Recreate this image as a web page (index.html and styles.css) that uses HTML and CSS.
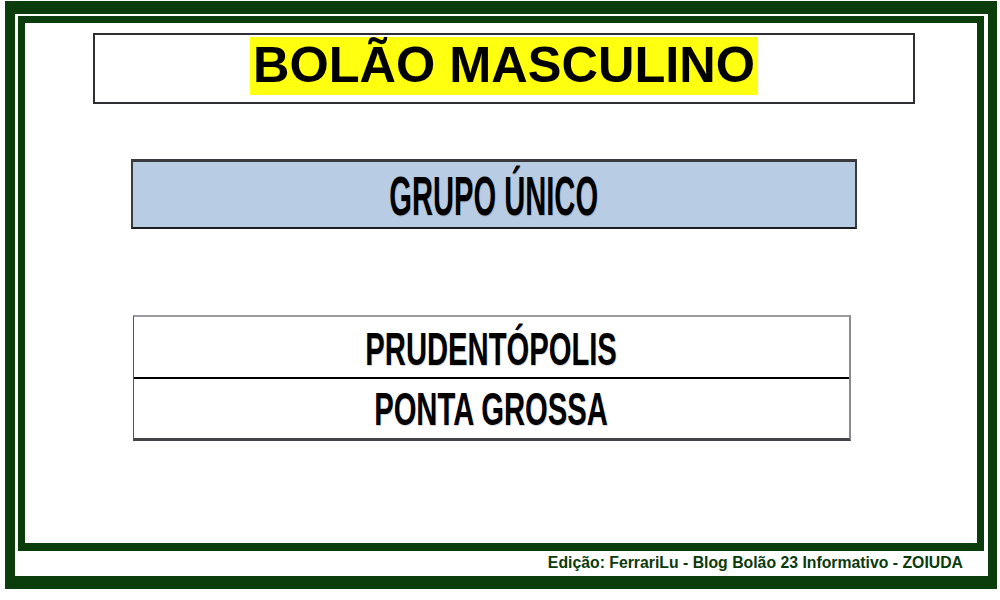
FILE: index.html
```html
<!DOCTYPE html>
<html lang="pt">
<head>
<meta charset="utf-8">
<title>Bolão Masculino</title>
<link rel="stylesheet" href="styles.css">
</head>
<body>
<div class="frame">
  <div class="panel">
    <div class="title-box">
      <span class="title-mark">BOLÃO MASCULINO</span>
    </div>
    <div class="group-box">
      <span class="narrow narrow-group">GRUPO ÚNICO</span>
    </div>
    <div class="teams">
      <div class="team team-first"><span class="narrow narrow-team">PRUDENTÓPOLIS</span></div>
      <div class="team team-second"><span class="narrow narrow-team">PONTA GROSSA</span></div>
    </div>
  </div>
  <div class="footer">Edição: FerrariLu - Blog Bolão 23 Informativo - ZOIUDA</div>
</div>
</body>
</html>
```

FILE: styles.css
```css
html, body {
  margin: 0;
  padding: 0;
  background: #ffffff;
}

body {
  width: 1000px;
  height: 600px;
  overflow: hidden;
  font-family: "Liberation Sans", Arial, sans-serif;
}

.frame {
  box-sizing: border-box;
  margin: 1px 0 0 5px;
  width: 992px;
  height: 588px;
  border-style: solid;
  border-color: #0b3c0b;
  border-width: 13px 9px 13px 10px;
  padding: 2px 4px 0 3px;
  display: flex;
  flex-direction: column;
}

.panel {
  box-sizing: border-box;
  height: 535px;
  border: 7px solid #0b3c0b;
  border-bottom-width: 8px;
  background: #ffffff;
  display: flex;
  flex-direction: column;
  align-items: flex-start;
}

.title-box {
  box-sizing: border-box;
  margin: 10px 0 0 68px;
  width: 822px;
  height: 71px;
  border: 2px solid #2f2f33;
  padding: 2px 0 0;
  text-align: center;
}

.title-mark {
  display: inline-block;
  height: 58px;
  padding: 0 3px;
  line-height: 55px;
  background: #ffff10;
  color: #000000;
  font-weight: 700;
  font-size: 50.5px;
  white-space: nowrap;
}

.group-box {
  box-sizing: border-box;
  margin: 55px 0 0 106px;
  width: 726px;
  height: 70px;
  background: #b8cce4;
  border-style: solid;
  border-color: #3a3a3e;
  border-width: 3px 2px 2px 2px;
  border-bottom-color: #1e1e22;
  text-align: center;
  line-height: 67px;
  overflow: visible;
}

.narrow {
  display: inline-block;
  font-weight: 700;
  color: #000000;
  white-space: nowrap;
  text-shadow: 1px 1px 1px rgba(110, 110, 110, 0.3);
}

.narrow-group {
  font-size: 56px;
  transform: scaleX(0.52);
}

.narrow-team {
  font-size: 46px;
  transform: scaleX(0.635);
}

.teams {
  box-sizing: border-box;
  margin: 86px 0 0 108px;
  width: 718px;
  border-style: solid;
  border-color: #9a9aa0 #8a8a8e #444448 #555558;
  border-width: 2px 2px 3px 1px;
  display: flex;
  flex-direction: column;
}

.team {
  text-align: center;
}

.team-first {
  height: 60px;
  line-height: 64px;
  border-bottom: 2px solid #000000;
}

.team-second {
  height: 59px;
  line-height: 60px;
}

.footer {
  height: 24px;
  line-height: 23px;
  text-align: right;
  padding-right: 21px;
  color: #0b3a0b;
  font-weight: 700;
  font-size: 15.8px;
  white-space: nowrap;
}
```
